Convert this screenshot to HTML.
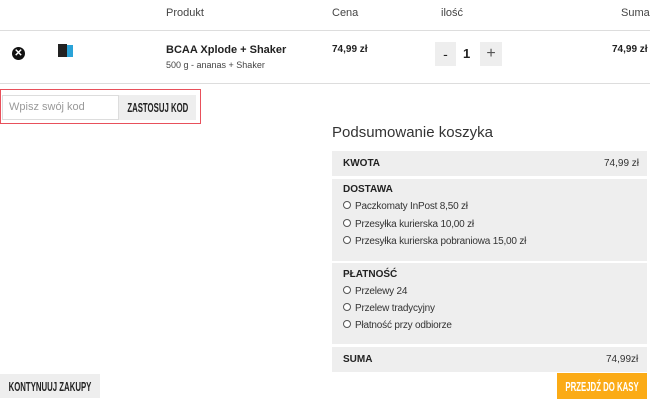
<!DOCTYPE html>
<html><head><meta charset="utf-8"><style>
*{margin:0;padding:0;box-sizing:border-box}
body{width:650px;height:401px;background:#fff;font-family:"Liberation Sans",sans-serif;color:#222;position:relative;overflow:hidden;font-size:11px}
.a{position:absolute;white-space:nowrap}
.n{font-size:13px;color:#222;display:flex;align-items:center;justify-content:center}
.n span{display:inline-block;transform:scaleX(0.6);white-space:nowrap;font-weight:bold}
.hr{position:absolute;left:0;width:650px;height:1px;background:#ddd}
.g{position:absolute;left:332px;width:315px;background:#eee}
.r{display:inline-block;width:8px;height:8px;border:1px solid #555;border-radius:50%;background:#fff;margin-right:4px;vertical-align:0}
.op{position:absolute;left:343px;font-size:10px;color:#333;letter-spacing:-0.2px}
</style></head><body>
<div class="a" style="left:166px;top:7px;color:#444">Produkt</div>
<div class="a" style="left:332px;top:7px;color:#444">Cena</div>
<div class="a" style="left:441px;top:7px;color:#444">ilość</div>
<div class="a" style="left:621px;top:7px;color:#444">Suma</div>
<div class="hr" style="top:30px"></div>
<div class="a" style="left:12px;top:47px;width:13px;height:13px;border-radius:50%;background:#111;color:#fff;font-size:10px;line-height:13px;text-align:center;font-weight:bold">✕</div>
<div class="a" style="left:58px;top:44px;width:9px;height:13px;background:#222"></div>
<div class="a" style="left:67px;top:45px;width:6px;height:12px;background:#2aa3d8"></div>
<div class="a" style="left:166px;top:44px;font-weight:bold;font-size:11px">BCAA Xplode + Shaker</div>
<div class="a" style="left:166px;top:60px;font-size:9px;color:#444">500 g - ananas + Shaker</div>
<div class="a" style="left:332px;top:44px;font-weight:bold;font-size:10px">74,99 zł</div>
<div class="a n" style="left:435px;top:42px;width:21px;height:24px;background:#eee;font-size:14px">-</div>
<div class="a" style="left:463px;top:46px;font-weight:bold;font-size:13px">1</div>
<div class="a n" style="left:480px;top:42px;width:22px;height:24px;background:#eee;font-size:16px;color:#555">+</div>
<div class="a" style="left:612px;top:44px;font-weight:bold;font-size:10px">74,99 zł</div>
<div class="hr" style="top:83px"></div>
<div class="a" style="left:0;top:89px;width:201px;height:35px;border:1px solid #e8505b"></div>
<div class="a" style="left:2px;top:95px;width:117px;height:25px;border:1px solid #ddd;color:#999;padding:5px 6px;font-size:11px">Wpisz swój kod</div>
<div class="a n" style="left:119px;top:95px;width:77px;height:25px;background:#eee"><span>ZASTOSUJ KOD</span></div>
<div class="a" style="left:332px;top:124px;font-size:15px;color:#333">Podsumowanie koszyka</div>
<div class="g" style="top:151px;height:25px"></div>
<div class="a" style="left:343px;top:158px;font-weight:bold;font-size:10px">KWOTA</div>
<div class="a" style="left:604px;top:158px;font-size:10px;color:#333">74,99 zł</div>
<div class="g" style="top:179px;height:82px"></div>
<div class="a" style="left:343px;top:184px;font-weight:bold;font-size:10px">DOSTAWA</div>
<div class="op" style="top:201px"><span class="r"></span>Paczkomaty InPost 8,50 zł</div>
<div class="op" style="top:219px"><span class="r"></span>Przesyłka kurierska 10,00 zł</div>
<div class="op" style="top:236px"><span class="r"></span>Przesyłka kurierska pobraniowa 15,00 zł</div>
<div class="g" style="top:263px;height:81px"></div>
<div class="a" style="left:343px;top:269px;font-weight:bold;font-size:10px">PŁATNOŚĆ</div>
<div class="op" style="top:286px"><span class="r"></span>Przelewy 24</div>
<div class="op" style="top:303px"><span class="r"></span>Przelew tradycyjny</div>
<div class="op" style="top:320px"><span class="r"></span>Płatność przy odbiorze</div>
<div class="g" style="top:347px;height:25px"></div>
<div class="a" style="left:343px;top:354px;font-weight:bold;font-size:10px">SUMA</div>
<div class="a" style="left:606px;top:354px;font-size:10px;color:#333">74,99zł</div>
<div class="a n" style="left:557px;top:373px;width:90px;height:26px;background:#fbab16;color:#fff"><span>PRZEJDŹ DO KASY</span></div>
<div class="a n" style="left:0;top:374px;width:100px;height:24px;background:#eee"><span>KONTYNUUJ ZAKUPY</span></div>
</body></html>
